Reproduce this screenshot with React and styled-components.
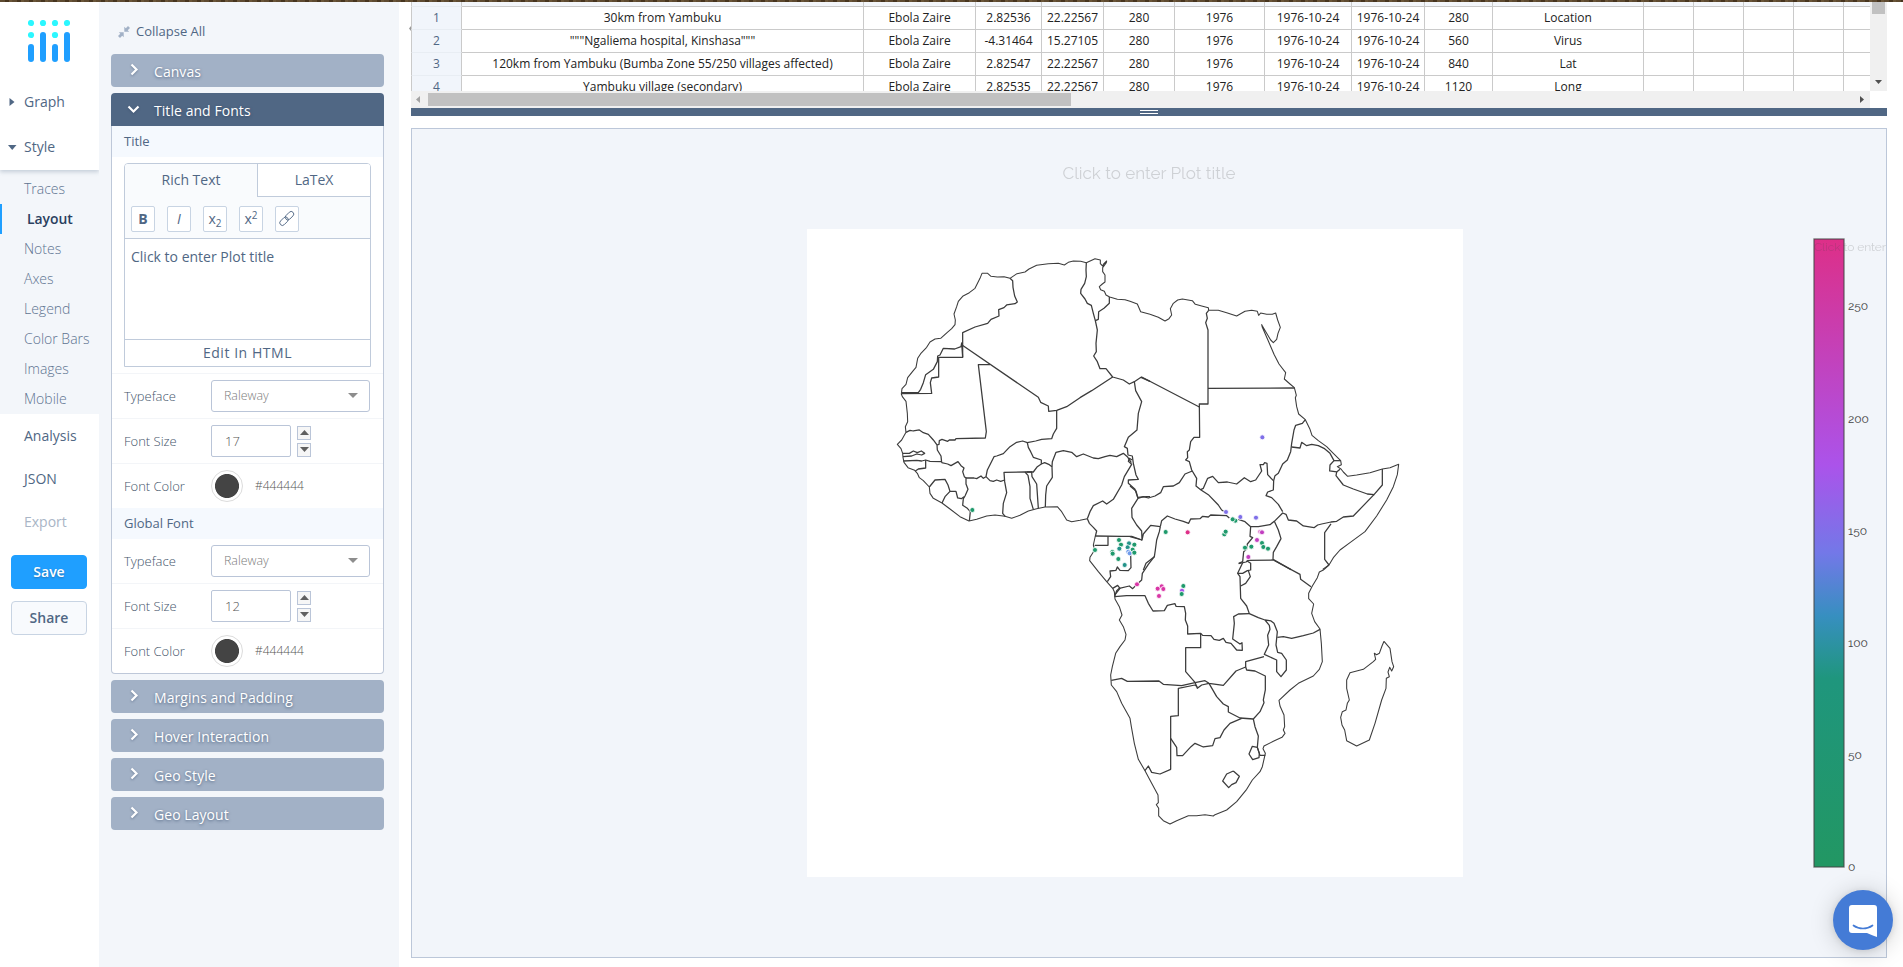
import React from "react";
import styled, { createGlobalStyle, css } from "styled-components";

const slate = "#506784";
const mist = "#f3f6fa";
const line = "#bec8d9";

const Global = createGlobalStyle`
  * { box-sizing: border-box; }
  body {
    margin: 0;
    background: #fff;
    color: ${slate};
    font-family: "Open Sans", "Noto Sans", sans-serif;
    font-size: 14px;
    overflow: hidden;
  }
  button, input { font: inherit; color: inherit; }
`;

const Page = styled.div`
  height: 967px;
  display: flex;
  flex-direction: column;
`;

const TopStrip = styled.div`
  height: 2px;
  flex: none;
  background: repeating-linear-gradient(90deg, #5e4a30 0 5px, #47351f 5px 9px, #6a5538 9px 12px);
`;

const Workspace = styled.div`
  flex: 1;
  min-height: 0;
  display: flex;
`;

/* ---------- left navigation ---------- */

const Nav = styled.nav`
  width: 99px;
  flex: none;
  display: flex;
  flex-direction: column;
`;

const NavTop = styled.div`
  height: 168px;
  padding-top: 18px;
  position: relative;
  box-shadow: 0 2px 4px rgba(80, 103, 132, 0.28);
  clip-path: inset(0 0 -8px 0);
`;

const Logo = styled.svg`
  display: block;
  width: 42px;
  height: 42px;
  margin: 0 0 17px 28px;
`;

const NavItem = styled.div`
  height: ${(p) => p.$h || 43}px;
  display: flex;
  align-items: center;
  padding-left: 24px;
  color: ${(p) => (p.$muted ? "#a9b5c6" : slate)};
  white-space: nowrap;
`;

const NavParent = styled(NavItem)`
  padding-left: 8px;
  gap: 4px;
  svg { width: 12px; height: 12px; flex: none; }
  fill: ${slate};
`;

const SubMenu = styled.div`
  background: ${mist};
  padding: 4px 0 0;
`;

const SubItem = styled.div`
  height: 30px;
  line-height: 29px;
  padding-left: 24px;
  font-weight: 300;
  color: #5d7390;
  white-space: nowrap;
  ${(p) =>
    p.$active &&
    css`
      border-left: 2px solid #1f9fff;
      padding-left: 25px;
      font-weight: 600;
      font-size: 13.9px;
      color: #2a3f5f;
    `}
`;

const NavButtons = styled.div`
  display: flex;
  flex-direction: column;
  gap: 12px;
  padding: 12px 12px 0 11px;
`;

const NavButton = styled.button`
  height: 34px;
  padding: 0 0 2px;
  border-radius: 4px;
  font-weight: 600;
  border: 1px solid ${(p) => (p.$primary ? "#1f9fff" : "#c8d4e3")};
  background: ${(p) => (p.$primary ? "#1f9fff" : "#f8fafd")};
  color: ${(p) => (p.$primary ? "#fff" : slate)};
  text-shadow: ${(p) => (p.$primary ? "0 1px 2px rgba(42,63,95,.45)" : "none")};
`;

/* ---------- settings panel ---------- */

const Settings = styled.aside`
  width: 300px;
  flex: none;
  background: ${mist};
  padding: 14px 15px 0 12px;
`;

const CollapseAll = styled.div`
  height: 30px;
  margin-bottom: 8px;
  padding-left: 7px;
  display: flex;
  align-items: center;
  gap: 6px;
  font-size: 13px;
  svg { width: 12px; height: 12px; fill: #a2b1c6; margin-top: 1px; }
`;

const Folds = styled.div`
  display: flex;
  flex-direction: column;
  gap: 6px;
`;

const FoldHead = styled.div`
  height: 33px;
  display: flex;
  align-items: center;
  padding: 1px 0 0 16px;
  border-radius: ${(p) => (p.$open ? "4px 4px 0 0" : "4px")};
  background: ${(p) => (p.$open ? slate : "#a2b1c6")};
  color: #fff;
  font-size: 14px;
  font-weight: 500;
  letter-spacing: 0.06px;
  text-shadow: 0 1px 3px rgba(42, 63, 95, 0.65);
  svg {
    width: 13px;
    height: 13px;
    margin: -3px 14px 0 0;
    fill: none;
    stroke: #fff;
    stroke-width: 2.2;
    filter: drop-shadow(0 1px 1px rgba(42, 63, 95, 0.4));
  }
`;

const FoldBody = styled.div`
  border: 1px solid ${line};
  border-top: 0;
  border-radius: 0 0 4px 4px;
  background: #fff;
  overflow: hidden;
`;

const SubHead = styled.div`
  height: 31px;
  line-height: 31px;
  padding-left: 12px;
  background: #f5f9fe;
  font-size: 13px;
`;

const Editor = styled.div`
  width: 247px;
  height: 204px;
  margin: 6px 0 6px 12px;
  border: 1px solid #c0cbdb;
  border-radius: 4px 4px 0 0;
  display: flex;
  flex-direction: column;
  overflow: hidden;
`;

const EditorTabs = styled.div`
  height: 33px;
  flex: none;
  display: grid;
  grid-template-columns: 132px 1fr;
  background: #f9fbfd;
`;

const EditorTab = styled.div`
  text-align: center;
  line-height: 31px;
  ${(p) =>
    !p.$active &&
    css`
      background: #fff;
      border-left: 1px solid #c0cbdb;
      border-bottom: 1px solid #c0cbdb;
    `}
`;

const Toolbar = styled.div`
  height: 42px;
  flex: none;
  display: flex;
  gap: 12px;
  padding: 9px 0 0 6px;
  background: #f9fbfd;
  border-bottom: 1px solid #c0cbdb;
`;

const Tool = styled.button`
  width: 24px;
  height: 26px;
  padding: 0;
  line-height: 24px;
  background: #fff;
  border: 1px solid #c8d4e3;
  border-radius: 2px;
  font-weight: ${(p) => (p.$bold ? 700 : 400)};
  font-style: ${(p) => (p.$italic ? "italic" : "normal")};
  display: flex;
  justify-content: center;
  align-items: center;
  sub, sup { font-size: 10px; line-height: 0; }
  sub { transform: translateY(4px); }
  sup { transform: translateY(-4px); }
  svg { width: 18px; height: 18px; fill: none; stroke: ${slate}; stroke-width: 0.9; }
`;

const EditArea = styled.div`
  flex: 1;
  padding: 8px 6px;
  line-height: 19px;
`;

const EditHtml = styled.div`
  height: 27px;
  line-height: 26px;
  border-top: 1px solid #c0cbdb;
  text-align: center;
  letter-spacing: 0.55px;
`;

const Field = styled.div`
  height: ${(p) => (p.$first ? 44 : 45)}px;
  padding-left: 12px;
  display: grid;
  grid-template-columns: 87px 1fr;
  align-items: center;
  border-top: ${(p) => (p.$first ? "0" : "1px solid #f3f5f8")};
`;

const Label = styled.label`
  font-size: 13px;
  font-weight: 300;
  color: #44546a;
  padding-bottom: 1px;
`;

const Control = styled.div`
  display: flex;
  align-items: center;
`;

const Select = styled.div`
  width: 159px;
  height: 32px;
  border: 1px solid #bac5d8;
  border-radius: 3px;
  background: #fff;
  padding: 0 11px 2px 12px;
  display: flex;
  align-items: center;
  justify-content: space-between;
  font-size: 12.4px;
  font-weight: 300;
  color: #7c7c7c;
  svg { width: 10px; height: 5px; fill: #8d8d8d; }
`;

const NumberBox = styled.div`
  width: 80px;
  height: 32px;
  border: 1px solid #bac5d8;
  border-radius: 2px;
  padding-left: 13px;
  line-height: 31px;
  font-size: 13px;
  font-weight: 300;
  color: #555;
`;

const Steppers = styled.div`
  margin-left: 6px;
  display: flex;
  flex-direction: column;
  gap: 3px;
`;

const Stepper = styled.button`
  width: 14px;
  height: 14px;
  padding: 0;
  border: 1px solid #bac5d8;
  background: #f6f6f6;
  display: flex;
  align-items: center;
  justify-content: center;
  svg { width: 9px; height: 5px; fill: #606060; }
`;

const Swatch = styled.div`
  width: 32px;
  height: 32px;
  border-radius: 50%;
  border: 1px solid #dcdcdc;
  background: radial-gradient(circle, #444 11.6px, #fff 12.4px);
`;

const Hex = styled.span`
  margin: -2px 0 0 12px;
  font-size: 12px;
  font-weight: 300;
  color: #555;
`;

/* ---------- data grid ---------- */

const Main = styled.main`
  flex: 1;
  min-width: 0;
  padding: 0 16px 0 12px;
  display: flex;
  flex-direction: column;
`;

const GridBox = styled.div`
  height: 106px;
  display: grid;
  grid-template-columns: 1459px 17px;
  grid-template-rows: 89px 17px;
  position: relative;
`;

const GridHandle = styled.svg`
  position: absolute;
  left: -2px;
  top: 24px;
  width: 2px;
  height: 5px;
  fill: #999;
`;

const GridView = styled.div`
  overflow: hidden;
`;

const columns =
  "51px 402px 112px 66px 62px 71px 90px 87px 73px 68px 151px 50px 50px 50px 50px 27px";

const Row = styled.div`
  display: grid;
  grid-template-columns: ${columns};
  width: 1460px;
  height: ${(p) => (p.$head ? 5 : 23)}px;
`;

const Cell = styled.div`
  border-right: 1px solid #cacaca;
  border-bottom: 1px solid #cacaca;
  background: ${(p) => (p.$head ? mist : "#fff")};
  text-align: center;
  font-size: 12px;
  line-height: 22px;
  color: #222;
  white-space: nowrap;
`;

const IndexCell = styled(Cell)`
  background: #f1f5fb;
  border-left: 1px solid #cacaca;
  border-bottom-color: #e8edf3;
  color: ${slate};
`;

const VTrack = styled.div`
  background: #f0f0f0;
  display: flex;
  flex-direction: column;
  justify-content: space-between;
  align-items: center;
  padding-bottom: 7px;
  svg { width: 7px; height: 4px; fill: #505050; }
`;

const VThumb = styled.div`
  width: 13px;
  height: 12px;
  background: #c1c1c1;
`;

const HTrack = styled.div`
  background: #f0f0f0;
  display: flex;
  align-items: center;
  padding: 0 6px 0 5px;
  svg { width: 4px; height: 7px; fill: #505050; }
  svg:first-child { fill: #a3a3a3; }
  svg:last-child { margin-left: auto; }
`;

const HThumb = styled.div`
  width: 643px;
  height: 13px;
  margin-left: 8px;
  background: #c1c1c1;
`;

const Splitter = styled.div`
  height: 8px;
  flex: none;
  background: ${slate};
  display: flex;
  flex-direction: column;
  align-items: center;
  gap: 2px;
  padding-top: 2px;
  &::before, &::after {
    content: "";
    width: 18px;
    height: 1px;
    background: #fff;
  }
`;

const PlotCard = styled.section`
  margin-top: 12px;
  width: 1476px;
  height: 830px;
  border: 1px solid #bcc7d9;
  background: #f2f5fa;
  svg { display: block; width: 1474px; height: 828px; }
`;

const PlotText = styled.text`
  font-family: Raleway, "Open Sans", sans-serif;
  fill: #444;
`;

const Chat = styled.button`
  position: absolute;
  left: 1833px;
  top: 890px;
  width: 60px;
  height: 60px;
  border: 0;
  padding: 2px 0 0;
  border-radius: 50%;
  background: #447bd6;
  box-shadow: 0 2px 24px rgba(0, 0, 0, 0.18), 0 1px 6px rgba(0, 0, 0, 0.1);
  display: flex;
  align-items: center;
  justify-content: center;
  svg { width: 28px; height: 32px; }
`;

/* ---------- data ---------- */

const rows = [
  ["30km from Yambuku", "2.82536", "22.22567", "280", "Location"],
  ['"""Ngaliema hospital, Kinshasa"""', "-4.31464", "15.27105", "560", "Virus"],
  ["120km from Yambuku (Bumba Zone 55/250 villages affected)", "2.82547", "22.22567", "840", "Lat"],
  ["Yambuku village (secondary)", "2.82535", "22.22567", "1120", "Long"],
];

const subItems = ["Traces", "Layout", "Notes", "Axes", "Legend", "Color Bars", "Images", "Mobile"];

/* Outlines are stored per region, three units to the pixel; the first line of each is the coast. */
const northWest = {
  origin: [880, 240],
  lines: [
    "810,223 782,215 772,192 750,184 735,179 712,178 689,171 678,165 673,154 662,149 658,140 667,132 675,126 675,105 668,95 668,83 679,68 680,63 671,72 668,78 661,71 661,60 645,56 632,62 619,68 602,64 580,63 565,67 553,75 535,70 505,71 470,76 447,87 435,96 411,101 390,115 372,110 352,111 333,109 323,100 306,100 300,115 285,145 268,158 248,169 235,184 230,200 222,222 226,240 225,254 215,266 202,277 182,295 165,297 150,306 140,322 122,341 113,355 108,382 98,394 83,413 78,433 66,446 64,462 67,470 78,484 82,520 83,545 76,560 78,577 65,600 52,613 63,626 68,640 69,652 72,667 84,683 104,691 112,700 118,713 130,722 148,741 150,760 160,775 186,789 210,807 240,830 267,843 290,838 320,828 345,825 375,829 395,835 420,826 445,813 470,806 495,801 532,800 545,815 560,840 575,845 600,841 622,836",
    "390,115 398,122 399,142 404,168 412,186 405,191 380,195 372,203 356,209 357,228 333,238 323,250 285,261 248,278 248,352 176,352 176,411 155,414 151,428 155,460 64,461",
    "248,352 245,309 243,320 224,327 190,325 180,345 173,348 172,365 160,388 137,404 130,428 122,448 115,458 64,458",
    "245,314 475,472 482,487 505,498 506,514 530,511 560,500 600,473 635,452 698,411",
    "330,374 295,374 319,575 316,594 228,596 225,600 208,600 203,604 186,598 178,602 177,613 171,615",
    "78,577 90,571 100,573 118,570 130,578 145,583 160,600 171,615 172,630 183,648 185,668",
    "69,640 88,640 100,633 112,638 124,633 134,640 125,645 110,642 95,648 69,650",
    "70,663 110,661 125,663 137,660 150,664 185,665",
    "137,661 137,684 115,687 106,693",
    "185,668 203,672 213,677 234,665 243,677 252,684 248,695 253,710 258,714 258,732 264,748 255,768 250,776 248,796 262,805 271,815 268,843",
    "148,741 165,720 195,718 204,735 210,754 228,754 233,774 244,776 252,770",
    "186,789 195,770 210,754",
    "258,714 282,714 290,716 303,708 310,715 318,710 330,722 340,724 350,720 362,724 374,720",
    "318,710 322,690 342,650 350,648 370,641 390,620 410,607 428,603 442,608 467,603 485,598 515,596 520,582 530,565 530,511",
    "442,608 445,622 452,635 460,652 484,660 484,672 472,680 460,696 435,696 372,697 374,725 380,758 370,790 368,820 376,830",
    "435,696 444,706 450,740 450,775 460,808",
    "440,696 455,696 456,710 470,732 475,805",
    "484,672 494,668 508,674 516,680 517,712 500,738 497,765 496,801",
    "516,680 517,665 528,637 550,632 575,637 590,650 610,642 640,654 655,656 675,650 690,646 710,650 730,640 742,650 754,668",
    "619,68 618,90 619,110 614,130 603,148 602,160 615,177 622,190 634,196 640,220 646,242 655,238 656,215 672,205 688,190 688,171",
    "646,242 652,270 648,310 649,335 641,348 652,365 660,386 678,386 698,411 730,420 748,432 763,425 783,412 810,424",
    "763,425 767,452 785,485 775,520 771,570 745,592 733,620 742,625 744,645 757,648 760,670 768,705 775,718 745,720 745,730 765,748 773,772 800,770 810,770",
    "757,660 748,655 745,664 755,673 733,710 725,735 700,778 680,792 668,783 640,797 630,815 622,836",
    "622,836 628,850 640,862 650,873 646,889",
  ],
};

const northEast = {
  origin: [1130, 270],
  lines: [
    "60,133 85,142 105,153 117,146 125,135 121,116 130,100 143,90 157,87 187,92 196,103 215,108 235,113 236,121 265,121 290,128 320,138 345,124 365,121 382,124 386,136 392,129 410,133 427,133 437,129 443,150 451,172 444,190 440,208 430,218 422,210 410,190 395,164 397,172 415,213 432,253 447,282 467,308 463,327 480,342 493,353 499,376 496,383 500,410 506,432 526,449 540,478 546,496 565,512 590,530 610,550 632,572 634,584 622,590 633,597 640,606 653,619 680,615 720,608 757,597 780,593 806,583 802,614 790,650 770,690 740,738 705,785 660,818 630,840 610,863 597,885 578,898",
    "236,121 229,130 232,145 227,158 234,180 234,402 208,402 209,502 192,502 182,515 178,540 172,545 173,563 167,570 178,575 185,600 200,625 198,648 212,659 235,674 265,705 275,720 288,728",
    "234,355 493,354",
    "60,334 35,321 208,411",
    "526,449 517,460 497,466 492,480 485,520 482,545 472,570 458,582 445,610 435,617 431,632 430,660 413,666 408,677 425,683 445,703 458,725",
    "485,531 510,534 515,517 530,527 545,523 565,527 582,535 600,550 612,572 600,585 599,603 620,606 618,617 640,645 670,657 712,672 732,674 757,645 757,597",
    "612,572 632,572",
    "620,606 630,598",
    "732,674 670,738 640,741 620,754 603,756 575,762 563,765 552,773 520,768 500,753 475,750 468,733 458,729 433,754 420,764 385,770 362,770 345,755 325,748",
    "603,762 584,788 584,868 597,885",
    "212,659 220,655 233,625 248,619 265,638 292,636 320,642 343,623 362,635 377,630 395,603 390,584 400,584 404,578 411,580 413,614 430,632",
    "0,648 18,663 24,685 40,680 55,684 75,678 92,668 100,650 130,648 148,638 165,612 187,603",
    "24,685 5,715 6,742 20,765 35,783 36,810 40,792 62,766 91,770",
    "0,800 36,810",
    "91,770 95,752 112,738 135,747 160,754 176,760 182,747 210,746 218,739 235,741 242,735 290,737 298,744",
    "91,770 88,785 80,810 76,840 73,860 48,880 40,900",
    "362,770 360,799 368,803 352,822 350,837 341,845 338,875 326,880",
    "433,754 445,780 453,806 440,830 430,847 429,868 483,899",
    "429,870 355,871 348,876 326,881",
  ],
};

const south = {
  origin: [1080, 500],
  lines: [
    "747,195 730,210 718,216 712,233 697,258 686,280 686,296 701,312 695,340 704,365 720,387 724,430 727,485 718,508 700,528 655,550 630,570 597,601 600,618 612,645 614,680 610,690 615,700 606,712 580,724 552,738 549,746 556,760 547,800 540,815 517,840 500,868 470,905 440,930 405,944 400,948 375,944 350,947 325,947 290,962 270,972 250,962 236,948 236,925 229,914 235,908 234,885 215,850 195,812 175,778 163,730 154,680 150,655 125,610 110,575 94,555 92,525 97,500 107,460 120,440 135,420 138,403 130,380 118,360 126,345 118,320 105,297 103,275 98,265 80,245 55,215 29,182 30,172 44,150 40,135 46,108",
    "46,108 125,109 155,109 186,120",
    "84,109 84,136 44,136",
    "152,165 153,203 145,212 120,211 112,201 108,211 90,213 92,230 82,245",
    "223,170 205,193 187,220 185,240 172,252 158,266 148,258 118,265 110,272 104,290",
    "98,265 113,256 120,265 104,285",
    "104,290 140,287 195,287 205,310 219,333 253,332 262,316 285,311 288,319 313,320 317,340 316,360 323,378 323,402 362,400 362,443 317,443 317,515 345,547 352,565 365,555 387,550",
    "94,541 125,535 142,544 237,543 250,553 305,557 345,548 375,542 387,550 430,556 468,513 497,501 497,485 552,470",
    "362,400 368,406 393,407 402,418 418,421 430,415 438,427 453,430 470,450 487,451 486,428 480,432 458,417 463,370 461,350 475,342 508,341",
    "488,188 473,220 480,230 482,295 500,318 508,341 535,353 555,360 568,376 570,388 563,406 566,435 553,463 590,480 590,515 603,530 619,510 619,480 605,460 593,457 588,435 592,395 582,370 573,363 555,360",
    "473,220 488,220 502,212 512,210 512,190 500,182",
    "482,258 497,250 511,230 505,212",
    "592,412 610,410 635,415 670,407 700,399 720,388",
    "580,180 660,223 662,238 693,260",
    "497,501 500,510 525,513 556,528 556,570 550,600 552,608 540,635 520,657 480,654 445,636 445,620 430,612 410,590 387,550",
    "352,560 345,555 295,565 295,647 272,649 272,808 240,822 215,817 205,798 195,812",
    "272,715 290,742 291,767 308,767 333,740 345,730 370,741 398,737 405,716 420,713 432,690 450,670 485,655",
    "520,657 525,680 535,708 532,742 540,766 556,766",
    "532,742 517,739 507,762 518,779 537,773 538,760 532,742",
    "460,813 478,829 468,848 455,854 446,863 428,843 440,822 460,813",
  ],
};

const madagascar = {
  origin: [1080, 500],
  lines: [
    "912,424 930,445 936,485 941,500 935,513 929,502 924,516 928,530 919,535 918,565 905,600 885,670 868,720 830,738 800,722 794,690 786,675 782,652 787,635 798,630 802,610 808,600 800,565 800,540 810,518 850,508 880,485 887,478 883,460 890,464 898,460 906,438 912,424",
  ],
};

const regions = { northWest, northEast, south, madagascar };

const green = "#1f9a6c", teal = "#24938a", blue = "#6f9bea", violet = "#7f6fe8", orchid = "#c23fc0", pink = "#d936a6", rose = "#de2f88";

const points = [
  [-323, 30, green], [547, -188, violet],
  [438, 36, violet], [481, 51, violet], [528, 53, violet],
  [466, 62, green], [458, 58, green], [257, 96, green], [323, 97, rose],
  [433, 103, green], [437, 95, green], [540, 95, "#e58bd3"], [546, 97, orchid],
  [531, 120, orchid], [546, 129, green], [550, 141, green], [564, 146, green],
  [514, 140, green], [495, 143, green], [505, 171, orchid],
  [45, 150, green], [117, 120, green], [123, 134, green], [147, 130, teal],
  [163, 134, green], [143, 142, teal], [118, 146, teal], [158, 149, green],
  [97, 156, green], [98, 161, green], [145, 155, blue], [149, 160, blue],
  [163, 158, green], [115, 177, green], [134, 195, teal],
  [171, 253, pink], [245, 259, pink], [233, 266, pink], [250, 267, pink], [237, 288, pink],
  [310, 258, green], [306, 272, "#a656ea"], [305, 282, green],
];

const ticks = [[250, 306], [200, 419], [150, 531], [100, 643], [50, 755], [0, 867]];

/* ---------- small drawings ---------- */

const Tri = ({ d }) => {
  const shape = {
    up: ["0 0 10 5", "0,5 10,5 5,0"],
    down: ["0 0 10 5", "0,0 10,0 5,5"],
    left: ["0 0 5 10", "5,0 5,10 0,5"],
    right: ["0 0 5 10", "0,0 0,10 5,5"],
  }[d];
  return (
    <svg viewBox={shape[0]} preserveAspectRatio="none">
      <polygon points={shape[1]} />
    </svg>
  );
};

function Fold({ title, open, children }) {
  return (
    <div>
      <FoldHead $open={open}>
        <svg viewBox="0 0 13 13">
          <path d={open ? "M1.5 4.5 6.5 9.5 11.5 4.5" : "M4.5 1.5 9.5 6.5 4.5 11.5"} />
        </svg>
        {title}
      </FoldHead>
      {open && <FoldBody>{children}</FoldBody>}
    </div>
  );
}

function FontFields({ size, flush }) {
  return (
    <>
      <Field $first={flush}>
        <Label>Typeface</Label>
        <Select>
          Raleway <Tri d="down" />
        </Select>
      </Field>
      <Field>
        <Label>Font Size</Label>
        <Control>
          <NumberBox>{size}</NumberBox>
          <Steppers>
            <Stepper><Tri d="up" /></Stepper>
            <Stepper><Tri d="down" /></Stepper>
          </Steppers>
        </Control>
      </Field>
      <Field>
        <Label>Font Color</Label>
        <Control>
          <Swatch />
          <Hex>#444444</Hex>
        </Control>
      </Field>
    </>
  );
}

function DataGrid() {
  return (
    <GridBox>
      <GridHandle viewBox="0 0 2 5"><polygon points="2,0 2,5 0,2.5" /></GridHandle>
      <GridView>
        <Row $head>
          {Array.from({ length: 16 }, (_, i) =>
            i === 0 ? <IndexCell key={i} /> : <Cell key={i} $head />
          )}
        </Row>
        {rows.map(([place, lat, long, total, option], i) => (
          <Row key={place}>
            <IndexCell>{i + 1}</IndexCell>
            {[place, "Ebola Zaire", lat, long, "280", "1976", "1976-10-24", "1976-10-24", total, option, "", "", "", "", ""].map(
              (v, j) => <Cell key={j}>{v}</Cell>
            )}
          </Row>
        ))}
      </GridView>
      <VTrack>
        <VThumb />
        <Tri d="down" />
      </VTrack>
      <HTrack>
        <Tri d="left" />
        <HThumb />
        <Tri d="right" />
      </HTrack>
    </GridBox>
  );
}

function Plot() {
  return (
    <PlotCard>
      <svg viewBox="412 129 1474 828">
        <defs>
          <linearGradient id="scale" x1="0" y1="0" x2="0" y2="1">
            <stop offset="0" stopColor="#dd2f88" />
            <stop offset="0.36" stopColor="#ab53ea" />
            <stop offset="0.5" stopColor="#7378e8" />
            <stop offset="0.6" stopColor="#378fc0" />
            <stop offset="0.7" stopColor="#1f967d" />
            <stop offset="1" stopColor="#229763" />
          </linearGradient>
        </defs>
        <rect x="807" y="229" width="656" height="648" fill="#fff" />
        <PlotText x="1062.5" y="179" fontSize="17" textLength="173" opacity="0.2">
          Click to enter Plot title
        </PlotText>
        {Object.entries(regions).map(([name, { origin, lines }]) => (
          <g
            key={name}
            transform={`translate(${origin[0]} ${origin[1]}) scale(0.33333)`}
            fill="none"
            stroke="#3c3c3c"
            strokeLinejoin="round"
          >
            {lines.map((p, i) => (
              <polyline key={i} points={p} strokeWidth={i === 0 ? 3.2 : 3.8} />
            ))}
          </g>
        ))}
        <g transform="translate(1080 500) scale(0.33333)" stroke="#fff" strokeWidth="2.5">
          {points.map(([x, y, c], i) => <circle key={i} cx={x} cy={y} r="7.5" fill={c} />)}
        </g>
        <rect x="1814" y="239" width="30" height="628" fill="url(#scale)" stroke="#444" strokeOpacity="0.75" strokeWidth="1.3" />
        <PlotText x="1814" y="251" fontSize="12" textLength="72" opacity="0.2">
          Click to enter
        </PlotText>
        {ticks.map(([v, y]) => (
          <PlotText key={v} x="1848" y={y + 3.7} fontSize="12">{v}</PlotText>
        ))}
      </svg>
    </PlotCard>
  );
}

export default function App() {
  return (
    <>
      <Global />
      <Page>
        <TopStrip />
        <Workspace>
          <Nav>
            <NavTop>
              <Logo viewBox="0 0 42 42">
                <g fill="#1f9fff">
                  <rect x="0" y="24" width="6" height="18" rx="3" />
                  <rect x="12" y="12" width="6" height="30" rx="3" />
                  <rect x="24" y="24" width="6" height="18" rx="3" />
                  <rect x="36" y="12" width="6" height="30" rx="3" />
                </g>
                <g fill="#2bf7ff">
                  {[[3, 3], [15, 3], [27, 3], [39, 3], [3, 15], [27, 15]].map(([x, y]) => (
                    <circle key={`${x}-${y}`} cx={x} cy={y} r="3.1" />
                  ))}
                </g>
              </Logo>
              <NavParent $h={45}>
                <svg viewBox="0 0 12 12"><polygon points="1.5,2 1.5,10 6.5,6" /></svg>
                Graph
              </NavParent>
              <NavParent $h={45}>
                <svg viewBox="0 0 12 12"><polygon points="0,4 8.5,4 4.2,9" /></svg>
                Style
              </NavParent>
            </NavTop>
            <SubMenu>
              {subItems.map((s) => (
                <SubItem key={s} $active={s === "Layout"}>{s}</SubItem>
              ))}
            </SubMenu>
            <NavItem>Analysis</NavItem>
            <NavItem>JSON</NavItem>
            <NavItem $muted>Export</NavItem>
            <NavButtons>
              <NavButton $primary>Save</NavButton>
              <NavButton>Share</NavButton>
            </NavButtons>
          </Nav>

          <Settings>
            <CollapseAll>
              <svg viewBox="0 0 12 12">
                <path d="M6.3.8v4.900h4.900L9.700 4.200 12 2 10 0 7.800 2.300zM5.700 11.200V6.300H.8l1.500 1.500L0 10l2 2 2.200-2.300z" />
              </svg>
              Collapse All
            </CollapseAll>
            <Folds>
              <Fold title="Canvas" />
              <Fold title="Title and Fonts" open>
                <SubHead>Title</SubHead>
                <Editor>
                  <EditorTabs>
                    <EditorTab $active>Rich Text</EditorTab>
                    <EditorTab>LaTeX</EditorTab>
                  </EditorTabs>
                  <Toolbar>
                    <Tool $bold>B</Tool>
                    <Tool $italic>I</Tool>
                    <Tool>x<sub>2</sub></Tool>
                    <Tool>x<sup>2</sup></Tool>
                    <Tool>
                      <svg viewBox="0 0 18 18">
                        <rect x="-4.9" y="-2.6" width="9.8" height="5.2" rx="2.6" transform="translate(6 11.2) rotate(-45)" />
                        <rect x="-4.9" y="-2.6" width="9.8" height="5.2" rx="2.6" transform="translate(11.5 5.7) rotate(-45)" />
                      </svg>
                    </Tool>
                  </Toolbar>
                  <EditArea>Click to enter Plot title</EditArea>
                  <EditHtml>Edit In HTML</EditHtml>
                </Editor>
                <FontFields size={17} />
                <SubHead>Global Font</SubHead>
                <FontFields size={12} flush />
              </Fold>
              <Fold title="Margins and Padding" />
              <Fold title="Hover Interaction" />
              <Fold title="Geo Style" />
              <Fold title="Geo Layout" />
            </Folds>
          </Settings>

          <Main>
            <DataGrid />
            <Splitter />
            <Plot />
          </Main>
        </Workspace>
      </Page>
      <Chat aria-label="Chat">
        <svg viewBox="0 0 28 32">
          <path d="M3 0h22a3 3 0 0 1 3 3v29c-4-1.200-7-3-10-4H3a3 3 0 0 1-3-3V3a3 3 0 0 1 3-3z" fill="#fff" />
          <path d="M4.500 20.500c5.500 4 13.500 4 19 0" fill="none" stroke="#447bd6" strokeWidth="1.700" strokeLinecap="round" />
        </svg>
      </Chat>
    </>
  );
}
